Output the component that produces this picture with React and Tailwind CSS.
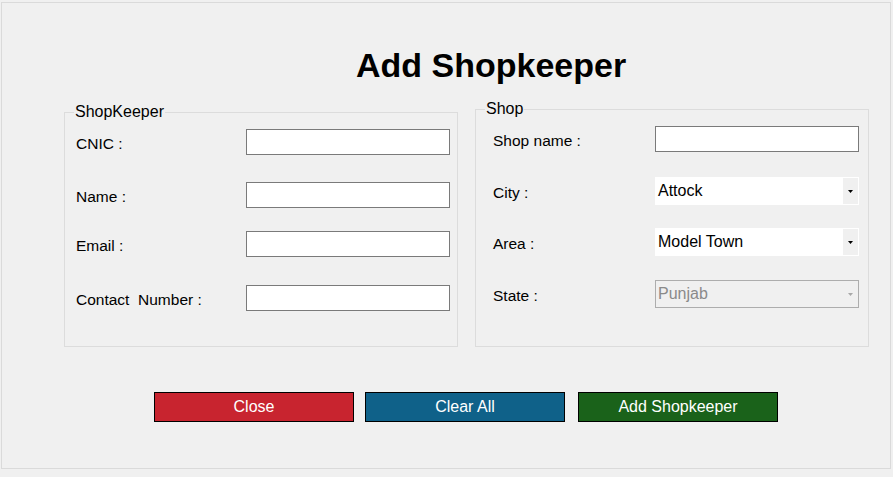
import React from 'react'

const font = { fontFamily: '"Liberation Sans", Arial, sans-serif' }

function Arrow({ color }) {
  return (
    <svg width="5" height="3" viewBox="0 0 5 3">
      <polygon points="0,0 5,0 2.5,3" fill={color} />
    </svg>
  )
}

function TextBox() {
  return <div className="w-[204px] h-[26px] bg-white border border-[#7a7a7a]" />
}

function Combo({ value, disabled }) {
  if (disabled) {
    return (
      <div className="w-[204px] h-[28px] flex border border-[#adadad] bg-[#f0f0f0]">
        <div className="flex-1 pl-[2px] flex items-center text-[16px] text-[#8a8a8a]">{value}</div>
        <div className="w-[15px] flex items-center justify-center">
          <Arrow color="#a8a8a8" />
        </div>
      </div>
    )
  }
  return (
    <div className="w-[204px] h-[28px] flex border border-white bg-white">
      <div className="flex-1 pl-[2px] flex items-center text-[16px] text-black">{value}</div>
      <div className="w-[15px] bg-[#f0f0f0] flex items-center justify-center">
        <Arrow color="#000" />
      </div>
    </div>
  )
}

function Row({ label, labelWidth, top, children }) {
  return (
    <div className="flex items-center" style={{ marginTop: top }}>
      <div className="text-[15.5px] leading-[18px] text-black pt-[3px]" style={{ width: labelWidth }}>{label}</div>
      {children}
    </div>
  )
}

export default function App() {
  return (
    <div className="w-[893px] h-[477px] bg-[#f0f0f0] pt-[2px] pl-[1px]" style={font}>
      <div className="w-[890px] h-[467px] border border-[#dadada] flex flex-col">
        {/* title */}
        <h1 className="mt-[42px] pl-[354px] text-[34px] leading-[40px] font-bold text-black">Add Shopkeeper</h1>

        <div className="flex items-start mt-[15px] ml-[62px] gap-[17px]">
          {/* shopkeeper group */}
          <fieldset className="w-[394px] h-[244px] mt-[3px] border border-[#dcdcdc] m-0 p-0 pl-[11px]">
            <legend className="ml-[-2px] px-[1px] text-[16px] leading-[18px] text-black">ShopKeeper</legend>
            <Row label="CNIC :" labelWidth={170} top={8}><TextBox /></Row>
            <Row label="Name :" labelWidth={170} top={27}><TextBox /></Row>
            <Row label="Email :" labelWidth={170} top={23}><TextBox /></Row>
            <Row label={'Contact\u00a0\u00a0Number :'} labelWidth={170} top={28}><TextBox /></Row>
          </fieldset>

          {/* shop group */}
          <fieldset className="w-[394px] h-[247px] border border-[#dcdcdc] m-0 p-0 pl-[17px]">
            <legend className="ml-[-8px] px-[1px] text-[16px] leading-[18px] text-black">Shop</legend>
            <Row label="Shop name :" labelWidth={162} top={8}><TextBox /></Row>
            <Row label="City :" labelWidth={162} top={25}><Combo value="Attock" /></Row>
            <Row label="Area :" labelWidth={162} top={23}><Combo value="Model Town" /></Row>
            <Row label="State :" labelWidth={162} top={24}><Combo value="Punjab" disabled /></Row>
          </fieldset>
        </div>

        {/* actions */}
        <div className="flex mt-[45px] ml-[152px]">
          <button className="w-[200px] h-[30px] border border-black bg-[#c8242f] text-white text-[16px]">Close</button>
          <button className="w-[200px] h-[30px] ml-[11px] border border-black bg-[#0f6189] text-white text-[16px]">Clear All</button>
          <button className="w-[200px] h-[30px] ml-[13px] border border-black bg-[#1a621a] text-white text-[16px]">Add Shopkeeper</button>
        </div>
      </div>
    </div>
  )
}
